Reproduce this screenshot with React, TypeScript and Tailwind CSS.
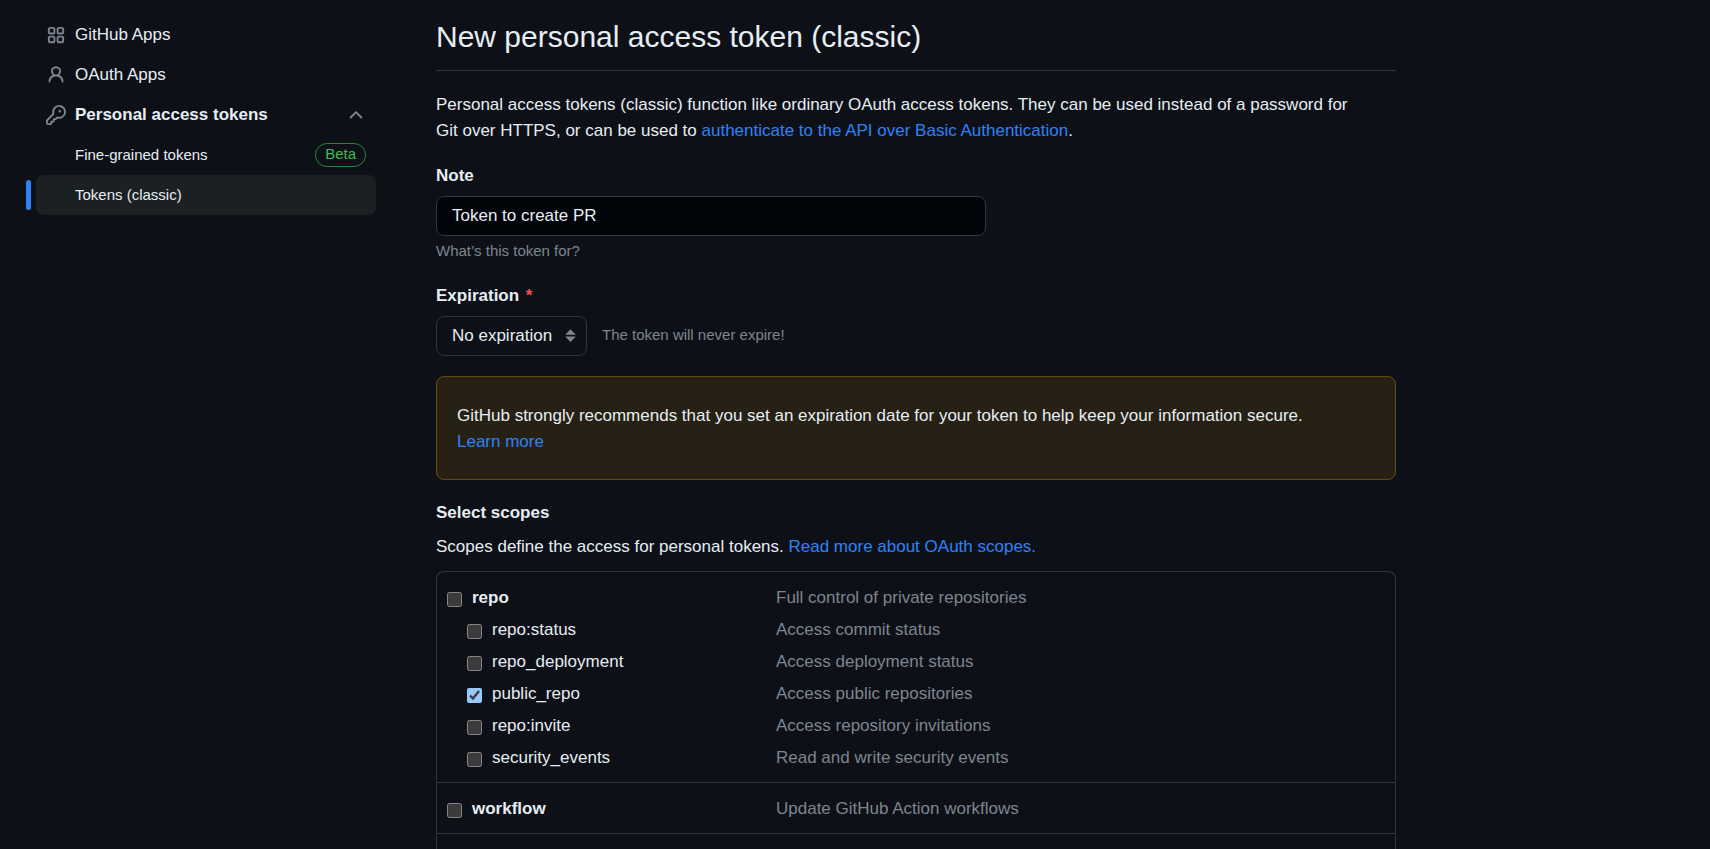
import type { ReactNode } from "react";

const icons = {
  apps: "M1.5 3.25c0-.966.784-1.75 1.75-1.75h2.5c.966 0 1.75.784 1.75 1.75v2.5A1.75 1.75 0 0 1 5.75 7.5h-2.5A1.75 1.75 0 0 1 1.5 5.75Zm7 0c0-.966.784-1.75 1.75-1.75h2.5c.966 0 1.75.784 1.75 1.75v2.5a1.75 1.75 0 0 1-1.75 1.75h-2.5A1.75 1.75 0 0 1 8.5 5.75Zm-7 7c0-.966.784-1.75 1.75-1.75h2.5c.966 0 1.75.784 1.75 1.75v2.5a1.75 1.75 0 0 1-1.75 1.75h-2.5a1.75 1.75 0 0 1-1.75-1.75Zm7 0c0-.966.784-1.75 1.75-1.75h2.5c.966 0 1.75.784 1.75 1.75v2.5a1.75 1.75 0 0 1-1.75 1.75h-2.5a1.75 1.75 0 0 1-1.75-1.75ZM3.25 3a.25.25 0 0 0-.25.25v2.5c0 .138.112.25.25.25h2.5A.25.25 0 0 0 6 5.75v-2.5A.25.25 0 0 0 5.75 3Zm7 0a.25.25 0 0 0-.25.25v2.5c0 .138.112.25.25.25h2.5a.25.25 0 0 0 .25-.25v-2.5a.25.25 0 0 0-.25-.25Zm-7 7a.25.25 0 0 0-.25.25v2.5c0 .138.112.25.25.25h2.5a.25.25 0 0 0 .25-.25v-2.5a.25.25 0 0 0-.25-.25Zm7 0a.25.25 0 0 0-.25.25v2.5c0 .138.112.25.25.25h2.5a.25.25 0 0 0 .25-.25v-2.5a.25.25 0 0 0-.25-.25Z",
  person:
    "M10.561 8.073a6.005 6.005 0 0 1 3.432 5.142.75.75 0 1 1-1.498.07 4.5 4.5 0 0 0-8.99 0 .75.75 0 0 1-1.498-.07 6.004 6.004 0 0 1 3.431-5.142 3.999 3.999 0 1 1 5.123 0ZM10.5 5a2.5 2.5 0 1 0-5 0 2.5 2.5 0 0 0 5 0Z",
  key: "M10.5 0a5.499 5.499 0 1 1-1.288 10.848l-.932.932a.749.749 0 0 1-.53.22H7v.75a.749.749 0 0 1-.22.53l-.5.5a.749.749 0 0 1-.53.22H5v.75a.749.749 0 0 1-.22.53l-.5.5a.749.749 0 0 1-.53.22h-2A1.75 1.75 0 0 1 0 14.25v-2c0-.199.079-.389.22-.53l4.932-4.932A5.5 5.5 0 0 1 10.5 0Zm-4 5.5c-.001.431.069.86.205 1.269a.75.75 0 0 1-.181.768L1.5 12.56v1.69c0 .138.112.25.25.25h1.69l.06-.06v-1.19a.75.75 0 0 1 .75-.75h1.19l.06-.06v-1.19a.75.75 0 0 1 .75-.75h1.19l1.023-1.025a.75.75 0 0 1 .768-.18A4 4 0 1 0 6.5 5.5ZM11 6a1 1 0 1 1 0-2 1 1 0 0 1 0 2Z",
  chevronUp:
    "M3.22 10.53a.749.749 0 0 1 0-1.06l4.25-4.25a.749.749 0 0 1 1.06 0l4.25 4.25a.749.749 0 1 1-1.06 1.06L8 6.811 4.28 10.53a.749.749 0 0 1-1.06 0Z",
  sort: "m4.074 9.427 3.396 3.396a.25.25 0 0 0 .354 0l3.396-3.396A.25.25 0 0 0 11.043 9H4.251a.25.25 0 0 0-.177.427ZM4.074 7.47 7.47 4.073a.25.25 0 0 1 .354 0L11.22 7.47a.25.25 0 0 1-.177.426H4.251a.25.25 0 0 1-.177-.426Z",
};

function Icon({ name, className = "size-5" }: { name: keyof typeof icons; className?: string }) {
  return (
    <svg viewBox="0 0 16 16" aria-hidden="true" className={`shrink-0 fill-[#7d8590] ${className}`}>
      <path d={icons[name]} />
    </svg>
  );
}

function TextLink({ children }: { children: ReactNode }) {
  return (
    <a href="#" className="text-[#2f81f7] hover:underline">
      {children}
    </a>
  );
}

function Sidebar() {
  return (
    <nav aria-label="Developer settings" className="w-[340px] shrink-0">
      <ul>
        <li>
          <a href="#" className="flex h-10 items-center gap-[9px] px-[10px]">
            <Icon name="apps" />
            GitHub Apps
          </a>
        </li>
        <li>
          <a href="#" className="flex h-10 items-center gap-[9px] px-[10px]">
            <Icon name="person" />
            OAuth Apps
          </a>
        </li>
        <li>
          <button
            type="button"
            aria-expanded="true"
            className="flex h-10 w-full items-center gap-[9px] px-[10px] text-left font-bold"
          >
            <Icon name="key" />
            <span className="grow">Personal access tokens</span>
            <Icon name="chevronUp" />
          </button>
          <ul className="text-[15px]">
            <li>
              <a href="#" className="flex h-10 items-center justify-between pr-[10px] pl-[39px]">
                Fine-grained tokens
                <span className="rounded-full border border-[#238636] px-[9px] pb-0.5 leading-5 text-[#3fb950]">
                  Beta
                </span>
              </a>
            </li>
            <li className="relative">
              <span className="absolute top-[5px] -left-[10px] h-[30px] w-[5px] rounded-full bg-[#2f81f7]" />
              <a
                href="#"
                aria-current="page"
                className="flex h-10 items-center rounded-lg bg-[#1b2023] pl-[39px]"
              >
                Tokens (classic)
              </a>
            </li>
          </ul>
        </li>
      </ul>
    </nav>
  );
}

type Scope = { name: string; description: string; checked?: boolean };

const scopeGroups: { scope: Scope; children: Scope[] }[] = [
  {
    scope: { name: "repo", description: "Full control of private repositories" },
    children: [
      { name: "repo:status", description: "Access commit status" },
      { name: "repo_deployment", description: "Access deployment status" },
      { name: "public_repo", description: "Access public repositories", checked: true },
      { name: "repo:invite", description: "Access repository invitations" },
      { name: "security_events", description: "Read and write security events" },
    ],
  },
  {
    scope: { name: "workflow", description: "Update GitHub Action workflows" },
    children: [],
  },
];

function ScopeRow({ scope, nested = false }: { scope: Scope; nested?: boolean }) {
  return (
    <li className="flex h-8 items-start">
      <label
        className={`flex w-[329px] shrink-0 gap-[10px] ${nested ? "pl-5" : "font-bold"}`}
      >
        <input
          type="checkbox"
          defaultChecked={scope.checked}
          className="mt-[7px] size-[15px] shrink-0 scheme-dark"
        />
        {scope.name}
      </label>
      <span className="text-[#7d8590]">{scope.description}</span>
    </li>
  );
}

export default function App() {
  return (
    <div className="flex min-h-screen gap-[60px] bg-[#0d1117] pl-9 font-['Liberation_Sans',Arial,sans-serif] text-[17px] leading-[26px] text-[#e6edf3]">
      <div className="pt-[15px]">
        <Sidebar />
      </div>
      <main className="flex max-w-[960px] grow flex-col pt-[15px]">
        <h1 className="border-b border-[#30363d] pb-3 text-[30px] leading-[43px]">
          New personal access token (classic)
        </h1>
        <p className="mt-[21px]">
          Personal access tokens (classic) function like ordinary OAuth access tokens. They can be used
          instead of a password for
          <br />
          Git over HTTPS, or can be used to{" "}
          <TextLink>authenticate to the API over Basic Authentication</TextLink>.
        </p>

        <label htmlFor="note" className="mt-[19px] font-bold">
          Note
        </label>
        <input
          id="note"
          type="text"
          defaultValue="Token to create PR"
          className="mt-[7px] h-10 w-full max-w-[550px] rounded-lg border border-[#30363d] bg-[#010409] px-[15px]"
        />
        <p className="mt-[5px] text-[15px] leading-[20px] text-[#7d8590]">What’s this token for?</p>

        <label htmlFor="expiration" className="mt-[22px] font-bold">
          Expiration <span className="ml-0.5 text-[#f85149]">*</span>
        </label>
        <div className="mt-[7px] flex items-center gap-[15px]">
          <div className="relative">
            <select
              id="expiration"
              className="h-10 w-[151px] appearance-none rounded-lg border border-[#30363d] bg-[#0d1117] pr-[25px] pl-[15px]"
            >
              <option>No expiration</option>
            </select>
            <Icon
              name="sort"
              className="pointer-events-none absolute top-2 right-[5px] size-[22px]"
            />
          </div>
          <span className="pb-0.5 text-[15px] text-[#7d8590]">The token will never expire!</span>
        </div>

        <div className="mt-5 rounded-lg border border-[#694a11] bg-[#272115] px-5 pt-[26px] pb-6">
          <p>
            GitHub strongly recommends that you set an expiration date for your token to help keep your
            information secure.
            <br />
            <TextLink>Learn more</TextLink>
          </p>
        </div>

        <h2 className="mt-5 font-bold">Select scopes</h2>
        <p className="mt-2">
          Scopes define the access for personal tokens. <TextLink>Read more about OAuth scopes.</TextLink>
        </p>

        <div className="mt-[11px] grow rounded-t-lg border border-b-0 border-[#30363d]">
          {scopeGroups.map(({ scope, children }) => (
            <ul key={scope.name} className="border-b border-[#30363d] px-[10px] pt-[13px] pb-[5px]">
              <ScopeRow scope={scope} />
              {children.map((child) => (
                <ScopeRow key={child.name} scope={child} nested />
              ))}
            </ul>
          ))}
        </div>
      </main>
    </div>
  );
}
